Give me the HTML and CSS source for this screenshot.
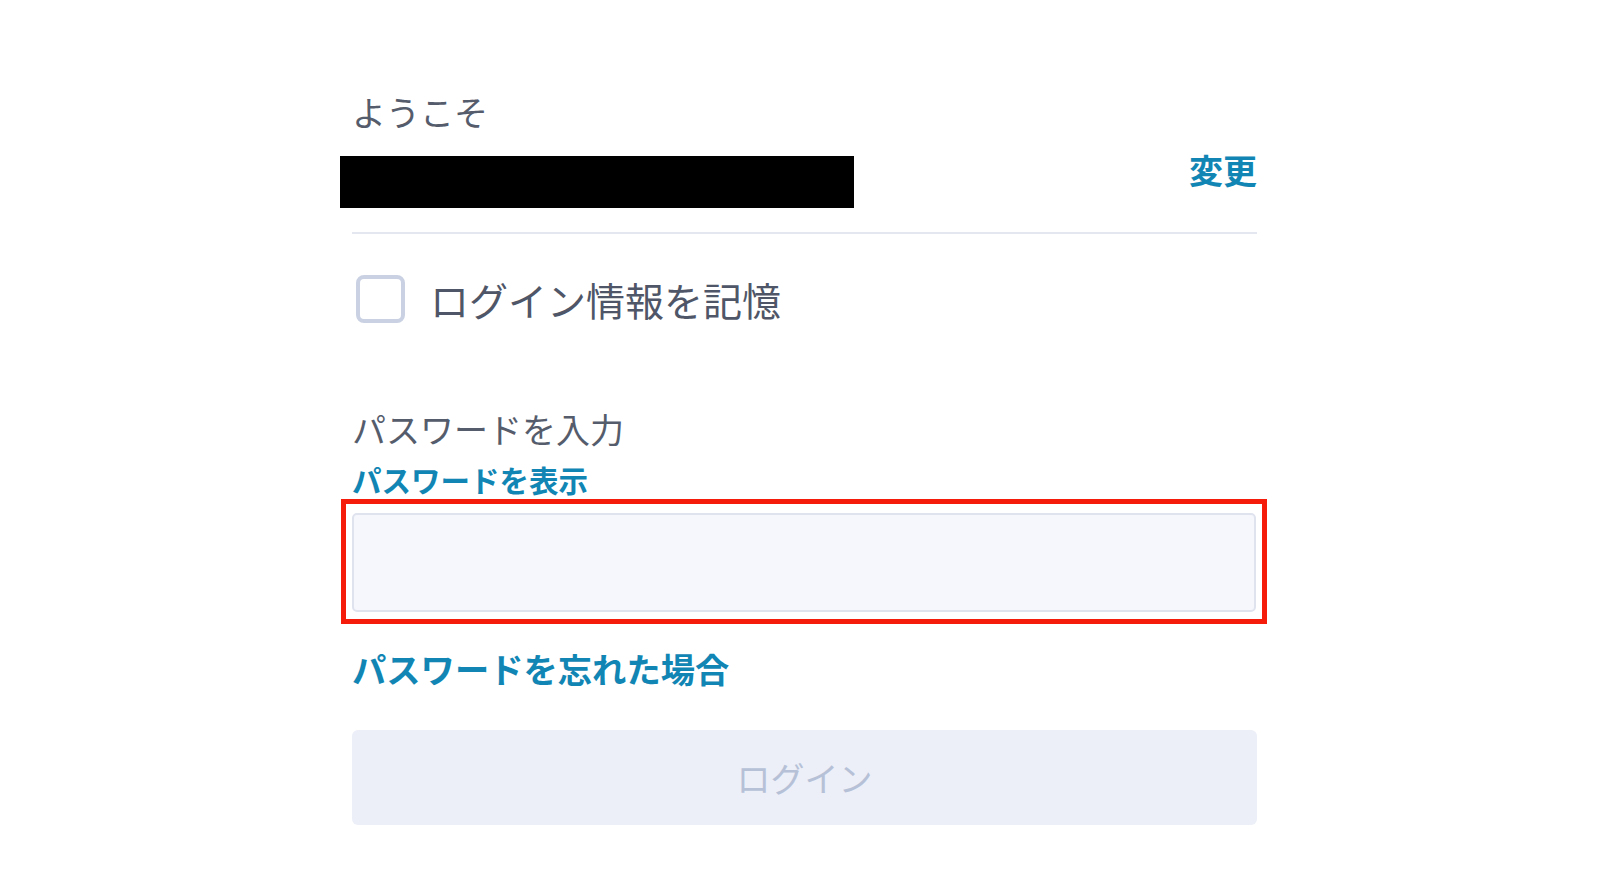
FILE: index.html
```html
<!DOCTYPE html>
<html lang="ja">
<head>
<meta charset="utf-8">
<title>ログイン</title>
<link rel="stylesheet" href="styles.css">
</head>
<body>
<main class="login">
  <div class="welcome">ようこそ</div>
  <div class="account-row">
    <div class="redacted"></div>
    <a class="link change">変更</a>
  </div>
  <div class="divider"></div>
  <label class="remember">
    <span class="checkbox"></span>
    <span class="remember-text">ログイン情報を記憶</span>
  </label>
  <div class="pw-label">パスワードを入力</div>
  <a class="link show-pw">パスワードを表示</a>
  <div class="highlight">
    <div class="pw-input"></div>
  </div>
  <a class="link forgot">パスワードを忘れた場合</a>
  <button class="login-btn" type="button">ログイン</button>
</main>
</body>
</html>
```

FILE: styles.css
```css
* { box-sizing: border-box; }
html, body {
  margin: 0;
  padding: 0;
  background: #ffffff;
}
body {
  font-family: "Noto Sans CJK JP", "Noto Sans", sans-serif;
  color: #4f5667;
}
.login {
  width: 905px;
  margin-left: 352px;
  padding-top: 95px;
  display: flex;
  flex-direction: column;
}
.welcome {
  font-size: 34px;
  line-height: 34px;
  color: #555c6b;
}
.account-row {
  margin-top: 27px;
  display: flex;
  justify-content: space-between;
  align-items: flex-start;
}
.redacted {
  margin-left: -12px;
  width: 514px;
  height: 52px;
  background: #000;
}
.link {
  color: #1186b4;
  font-weight: 700;
  text-decoration: none;
}
.change {
  margin-top: -3px;
  font-size: 34px;
  line-height: 34px;
}
.divider {
  margin-top: 24px;
  height: 2px;
  background: #e4e7ef;
}
.remember {
  margin-top: 41px;
  display: flex;
  align-items: center;
  gap: 25px;
}
.checkbox {
  margin-left: 4px;
  width: 49px;
  height: 48px;
  border: 4px solid #c9d1e3;
  border-radius: 8px;
  background: #fff;
}
.remember-text {
  font-size: 39px;
  line-height: 39px;
  color: #4f5667;
}
.pw-label {
  margin-top: 89px;
  font-size: 34px;
  line-height: 34px;
  color: #555c6b;
}
.show-pw {
  margin-top: 19px;
  font-size: 29.5px;
  line-height: 29px;
}
.highlight {
  margin-top: 5px;
  margin-left: -11px;
  margin-right: -10px;
  border: 5px solid #f61c0b;
  padding: 9px 6px 7px 6px;
}
.pw-input {
  height: 99px;
  background: #f5f7fc;
  border: 2px solid #dfe3ee;
  border-radius: 5px;
}
.forgot {
  margin-top: 27px;
  font-size: 34.3px;
  line-height: 34px;
}
.login-btn {
  margin-top: 45px;
  height: 95px;
  border: none;
  border-radius: 6px;
  background: #eceff8;
  color: #b6c1d7;
  font-family: "Noto Sans CJK JP", "Noto Sans", sans-serif;
  font-size: 34px;
  line-height: 34px;
  padding: 0;
}
```
